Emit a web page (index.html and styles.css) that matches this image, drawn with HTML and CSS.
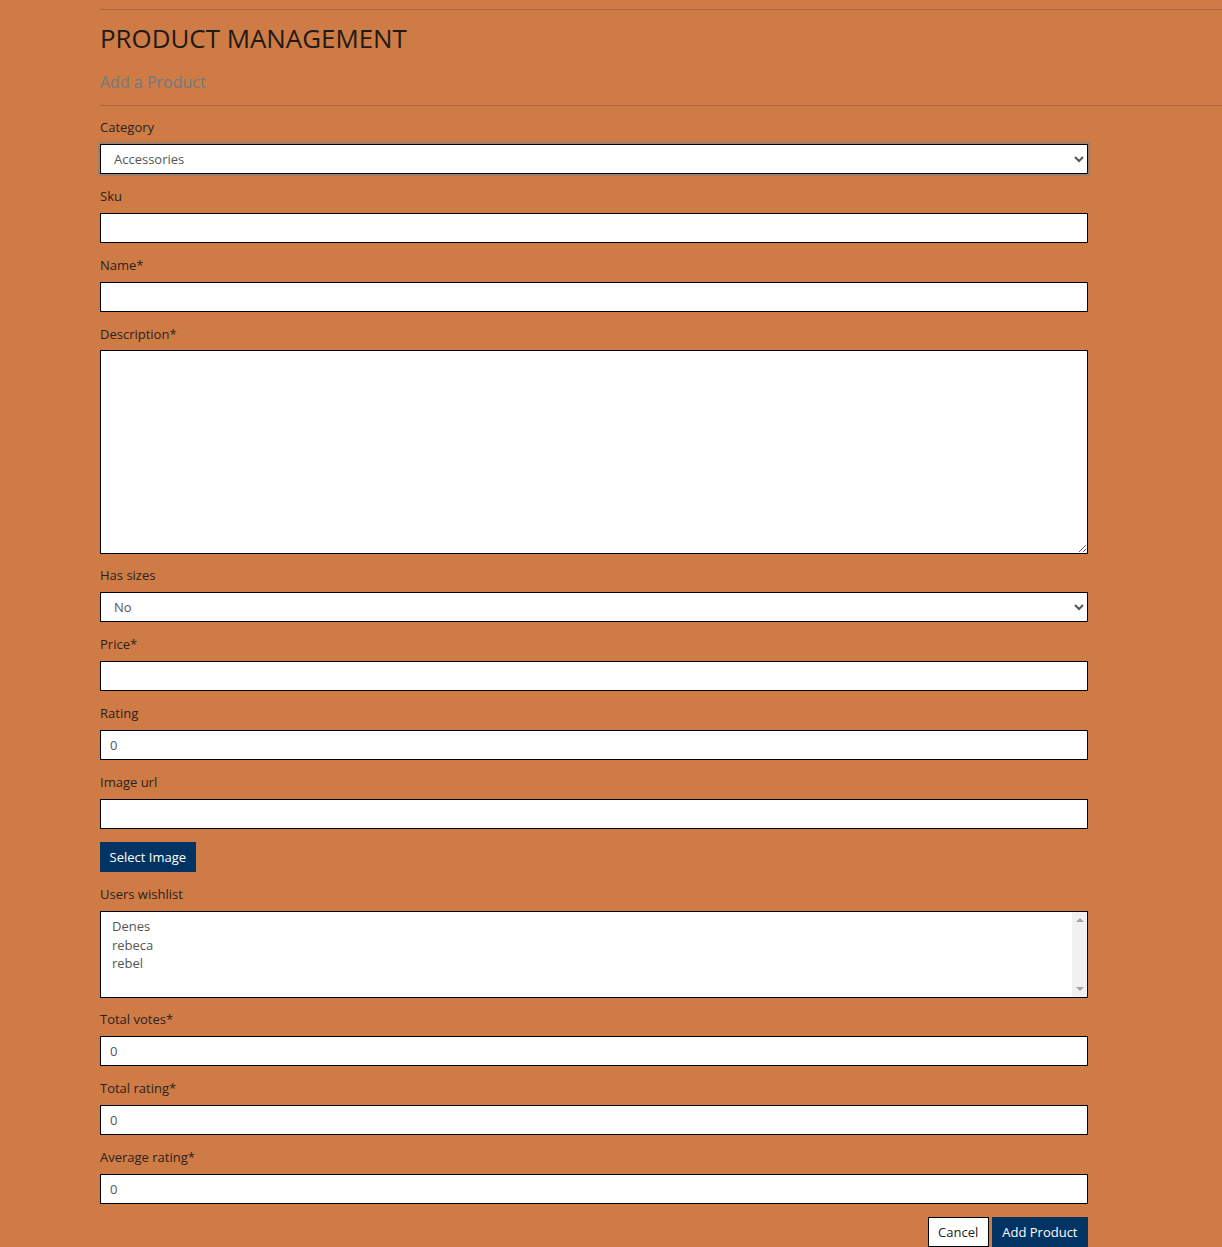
FILE: index.html
```html
<!DOCTYPE html>
<html lang="en">
<head>
<meta charset="utf-8">
<title>Product Management</title>
<link rel="stylesheet" href="styles.css">
</head>
<body>
<div class="page">
  <hr class="rule">
  <h1 class="title">PRODUCT MANAGEMENT</h1>
  <h2 class="subtitle">Add a Product</h2>
  <hr class="rule">
  <form class="form">
    <div class="group">
      <label class="label">Category</label>
      <select class="control select focused">
        <option>Accessories</option>
      </select>
    </div>
    <div class="group">
      <label class="label">Sku</label>
      <input class="control" type="text">
    </div>
    <div class="group">
      <label class="label">Name*</label>
      <input class="control" type="text">
    </div>
    <div class="group group-tight">
      <label class="label">Description*</label>
      <textarea class="control textarea"></textarea>
    </div>
    <div class="group">
      <label class="label">Has sizes</label>
      <select class="control select">
        <option>No</option>
      </select>
    </div>
    <div class="group">
      <label class="label">Price*</label>
      <input class="control" type="text">
    </div>
    <div class="group">
      <label class="label">Rating</label>
      <input class="control" type="text" value="0">
    </div>
    <div class="group">
      <label class="label">Image url</label>
      <input class="control" type="text">
    </div>
    <div class="group group-button">
      <button type="button" class="btn btn-primary btn-block">Select Image</button>
    </div>
    <div class="group group-tight">
      <label class="label">Users wishlist</label>
      <div class="listbox" role="listbox" aria-multiselectable="true">
        <div class="list-items">
          <div class="list-option" role="option">Denes</div>
          <div class="list-option" role="option">rebeca</div>
          <div class="list-option" role="option">rebel</div>
        </div>
        <div class="scrollbar">
          <span class="arrow arrow-up"></span>
          <span class="arrow arrow-down"></span>
        </div>
      </div>
    </div>
    <div class="group">
      <label class="label">Total votes*</label>
      <input class="control" type="text" value="0">
    </div>
    <div class="group">
      <label class="label">Total rating*</label>
      <input class="control" type="text" value="0">
    </div>
    <div class="group">
      <label class="label">Average rating*</label>
      <input class="control" type="text" value="0">
    </div>
    <div class="actions">
      <button type="button" class="btn btn-light">Cancel</button>
      <button type="button" class="btn btn-primary">Add Product</button>
    </div>
  </form>
</div>
</body>
</html>
```
FILE: styles.css
```css
html, body {
  margin: 0;
  padding: 0;
  background: #cf7b46;
}
body {
  font-family: "Open Sans", "Liberation Sans", sans-serif;
  color: #2b2220;
  overflow: hidden;
}
.page {
  padding: 9px 0 0 100px;
}
.rule {
  border: 0;
  border-top: 1px solid #b0653a;
  margin: 0;
  height: 0;
}
.title {
  margin: 12px 0 0;
  font-size: 25.9px;
  font-weight: 400;
  line-height: 32px;
  color: #1f1a18;
}
.subtitle {
  margin: 17px 0 12px;
  font-size: 16px;
  font-weight: 400;
  line-height: 22px;
  color: #6f7a82;
}
.form {
  width: 988px;
  padding-top: 11px;
}
.group {
  margin-bottom: 12px;
}
.group-tight {
  margin-bottom: 11px;
}
.group-button {
  padding-top: 1px;
}
.label {
  display: block;
  font-size: 13px;
  line-height: 20px;
  margin-bottom: 7px;
  color: #2b2220;
}
.control {
  display: block;
  box-sizing: border-box;
  width: 988px;
  height: 30px;
  margin: 0;
  border: 1px solid #000;
  border-radius: 0;
  background: #fff;
  font-family: "Open Sans", "Liberation Sans", sans-serif;
  font-size: 13px;
  color: #555;
  padding: 0 9px;
  outline: none;
}
.select {
  padding-left: 9px;
}
.focused {
  box-shadow: 0 0 0 2px #a07e6c;
}
.textarea {
  height: 204px;
  resize: vertical;
  margin-top: -1px;
}
.listbox {
  display: flex;
  box-sizing: border-box;
  width: 988px;
  height: 87px;
  border: 1px solid #000;
  background: #fff;
}
.list-items {
  flex: 1;
  padding: 5px 0 0 11px;
  font-size: 13px;
  color: #555;
}
.list-option {
  line-height: 18.5px;
}
.scrollbar {
  position: relative;
  width: 15px;
  background: #f1f1f1;
}
.arrow {
  position: absolute;
  left: 4px;
  width: 0;
  height: 0;
  border-left: 4px solid transparent;
  border-right: 4px solid transparent;
}
.arrow-up {
  top: 6px;
  border-bottom: 4px solid #a3a3a3;
}
.arrow-down {
  bottom: 6px;
  border-top: 4px solid #a3a3a3;
}
.btn {
  box-sizing: border-box;
  height: 30px;
  padding: 0 9.5px;
  font-family: "Open Sans", "Liberation Sans", sans-serif;
  font-size: 13px;
  border-radius: 0;
  cursor: pointer;
}
.btn-primary {
  background: #023463;
  color: #fff;
  border: 1px solid #023463;
}
.btn-block {
  display: block;
  padding: 0 8.5px;
  margin: 0;
}
.btn-light {
  background: #fff;
  color: #222;
  border: 1px solid #000;
}
.actions {
  display: flex;
  justify-content: flex-end;
  gap: 3px;
  padding-top: 1px;
}
```
